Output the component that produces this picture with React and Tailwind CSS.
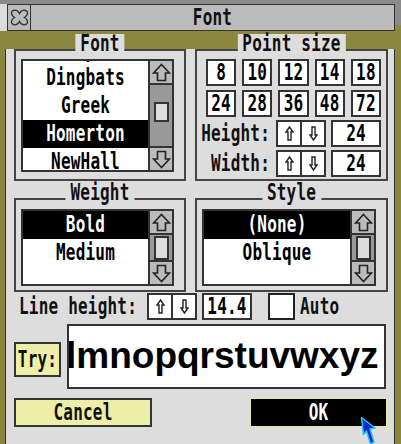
import React from "react";

const sys = "font-['DejaVu_Sans_Mono',monospace] font-bold text-[16px] tracking-[0.2px]";

// stretch the mono face to the tall system-font look
function Tall({ children, className = "" }) {
  return <span className={`inline-block scale-y-[1.4] ${className}`}>{children}</span>;
}

function BigArrow({ down }) {
  return (
    <svg width="19" height="19" viewBox="0 0 19 19" className={down ? "rotate-180" : ""}>
      <path d="M9.5 1.5 L17.5 10 L13.5 10 L13.5 17.5 L5.5 17.5 L5.5 10 L1.5 10 Z" fill="none" stroke="#222" strokeWidth="1.6" strokeLinejoin="miter" />
    </svg>
  );
}

function SmallArrow({ down }) {
  return (
    <svg width="9" height="15" viewBox="0 0 9 15" className={down ? "rotate-180" : ""}>
      <path d="M4.5 1 L8 6 L6 6 L6 14 L3 14 L3 6 L1 6 Z" fill="none" stroke="#222" strokeWidth="1.4" />
    </svg>
  );
}

function Group({ label, className, children }) {
  return (
    <div className={`relative border-2 border-[#444] ${className}`}>
      <span className={`absolute left-1/2 -translate-x-1/2 -top-[17px] px-[5px] bg-[#dddddd] leading-[20px] whitespace-nowrap text-[#111] ${sys}`}>
        <Tall>{label}</Tall>
      </span>
      {children}
    </div>
  );
}

function ListBox({ items, selected, size, offset = "", thumb }) {
  return (
    <div className={`flex border-2 border-[#333] ${size}`}>
      <div className="flex-1 bg-white overflow-hidden">
        <div className={offset}>
          {items.map((it) => (
            <div
              key={it}
              className={`h-[28px] flex items-center justify-center leading-[20px] ${sys} ${
                it === selected ? "bg-black text-white" : "text-black"
              }`}
            >
              <Tall>{it}</Tall>
            </div>
          ))}
        </div>
      </div>
      <div className="w-[24px] flex flex-col border-l-2 border-[#333]">
        <div className="h-[24px] bg-[#bbbbbb] border-b-2 border-[#333] flex items-center justify-center">
          <BigArrow />
        </div>
        <div className="flex-1 bg-[#999999] flex justify-center">
          <div className={`w-[15px] bg-[#dddddd] border-2 border-[#333] ${thumb}`} />
        </div>
        <div className="h-[24px] bg-[#bbbbbb] border-t-2 border-[#333] flex items-center justify-center">
          <BigArrow down />
        </div>
      </div>
    </div>
  );
}

function Bumpers() {
  return (
    <div className="flex w-[50px] h-[27px] border-2 border-[#333] bg-white">
      <div className="flex-1 flex items-center justify-center border-r-2 border-[#333]">
        <SmallArrow />
      </div>
      <div className="flex-1 flex items-center justify-center">
        <SmallArrow down />
      </div>
    </div>
  );
}

function Field({ children, className = "" }) {
  return (
    <div className={`h-[27px] border-2 border-[#333] bg-white flex items-center justify-center leading-[20px] text-black ${sys} ${className}`}>
      <Tall>{children}</Tall>
    </div>
  );
}

function CloseIcon() {
  return (
    <svg width="19" height="17" viewBox="0 0 19 17">
      <path
        d="M9.5 4.5 Q7.5 0.8 4.5 1.2 Q1 1.8 1.6 5 Q2.2 7.2 4.6 8.5 Q2.2 9.8 1.6 12 Q1 15.2 4.5 15.8 Q7.5 16.2 9.5 12.5 Q11.5 16.2 14.5 15.8 Q18 15.2 17.4 12 Q16.8 9.8 14.4 8.5 Q16.8 7.2 17.4 5 Q18 1.8 14.5 1.2 Q11.5 0.8 9.5 4.5 Z"
        fill="none"
        stroke="#333"
        strokeWidth="1.4"
      />
    </svg>
  );
}

const sizes = ["8", "10", "12", "14", "18", "24", "28", "36", "48", "72"];

export default function App() {
  return (
    <div className="relative w-[401px] h-[444px] overflow-hidden bg-[#8a883e]">
      <div className="h-[4px] bg-[#8a8a8a]" />

      {/* title bar */}
      <div className="flex h-[27px]">
        <div className="w-[7px] bg-[#dcdcdc]" />
        <div className="flex w-[388px] border border-[#333] bg-[#bbbbbb]">
          <div className="w-[23px] border-r border-[#333] flex items-center justify-center">
            <CloseIcon />
          </div>
          <div className={`flex-1 flex items-center justify-center leading-[20px] text-[#111] ${sys}`}>
            <Tall>Font</Tall>
          </div>
        </div>
        <div className="flex-1 h-[21px] bg-[#8a8a8a]" />
      </div>

      {/* window body */}
      <div className="ml-[5px] w-[390px] h-[404px] bg-[#dddddd] border-x border-b border-[#333] pl-[8px]">
        <div className="mt-[18px] flex gap-[9px]">
          <Group label="Font" className="w-[172px] h-[132px] pl-[5px] pt-[8px]">
            <ListBox
              items={["Corpus", "Dingbats", "Greek", "Homerton", "NewHall", "Sassoon"]}
              selected="Homerton"
              size="w-[153px] h-[113px]"
              offset="-mt-[25px]"
              thumb="mt-[17px] h-[20px]"
            />
          </Group>
          <Group label="Point size" className="w-[193px] h-[132px] pl-[9px] pt-[8px]">
            <div className="grid grid-cols-5 w-[175px] gap-x-[6px] gap-y-[4px]">
              {sizes.map((s) => (
                <Field key={s} className="h-[26px]">
                  {s}
                </Field>
              ))}
            </div>
            {["Height:", "Width:"].map((lab) => (
              <div key={lab} className="flex items-center -ml-[9px] mt-[3px]">
                <div className={`w-[73px] text-right leading-[20px] text-[#111] ${sys}`}>
                  <Tall>{lab}</Tall>
                </div>
                <div className="ml-[6px]">
                  <Bumpers />
                </div>
                <Field className="ml-[5px] w-[50px]">24</Field>
              </div>
            ))}
          </Group>
        </div>

        <div className="mt-[17px] flex gap-[9px]">
          <Group label="Weight" className="w-[172px] h-[94px] pl-[5px] pt-[9px]">
            <ListBox
              items={["Bold", "Medium"]}
              selected="Bold"
              size="w-[153px] h-[77px]"
              thumb="mt-[1px] h-[24px]"
            />
          </Group>
          <Group label="Style" className="w-[193px] h-[94px] pl-[5px] pt-[9px]">
            <ListBox
              items={["(None)", "Oblique"]}
              selected="(None)"
              size="w-[174px] h-[77px]"
              thumb="mt-[1px] h-[24px]"
            />
          </Group>
        </div>

        {/* line height */}
        <div className="mt-[1px] ml-[5px] flex items-center h-[27px]">
          <div className={`leading-[20px] whitespace-nowrap text-[#111] ${sys}`}>
            <Tall>Line height:</Tall>
          </div>
          <div className="ml-[10px]">
            <Bumpers />
          </div>
          <Field className="ml-[5px] w-[50px]">14.4</Field>
          <div className="ml-[16px] w-[27px] h-[27px] border-2 border-[#222] bg-white" />
          <div className={`ml-[5px] leading-[20px] text-[#111] ${sys}`}>
            <Tall>Auto</Tall>
          </div>
        </div>

        {/* sample */}
        <div className="mt-[4px] flex items-start">
          <div className={`mt-[18px] w-[47px] h-[35px] border-2 border-[#333] bg-[#eeeea8] flex items-center justify-center leading-[20px] text-[#111] ${sys}`}>
            <Tall>Try:</Tall>
          </div>
          <div className="ml-[6px] w-[319px] h-[65px] border-2 border-[#333] bg-white overflow-hidden">
            <div className="-ml-[3px] whitespace-nowrap font-['Liberation_Sans',Arial,sans-serif] font-bold text-[37px] leading-[59px] text-black">
              lmnopqrstuvwxyz
            </div>
          </div>
        </div>

        {/* actions */}
        <div className="mt-[9px] w-[373px] flex justify-between">
          <div className={`w-[138px] h-[29px] border-2 border-[#333] bg-[#eeeea8] flex items-center justify-center leading-[20px] text-[#111] ${sys}`}>
            <Tall>Cancel</Tall>
          </div>
          <div className={`w-[137px] h-[29px] border border-[#e8e8a0] bg-black flex items-center justify-center leading-[20px] text-white ${sys}`}>
            <Tall>OK</Tall>
          </div>
        </div>
      </div>

      {/* mouse pointer */}
      <svg className="absolute left-[360px] top-[416px]" width="18" height="30" viewBox="0 0 18 30">
        <path d="M1.5 1.5 L15 12 L10 13 L14 26 L10.5 28 L6.5 15 L3.5 18.5 Z" fill="#1028c8" stroke="#18c8f0" strokeWidth="1.5" strokeLinejoin="round" />
      </svg>
    </div>
  );
}
